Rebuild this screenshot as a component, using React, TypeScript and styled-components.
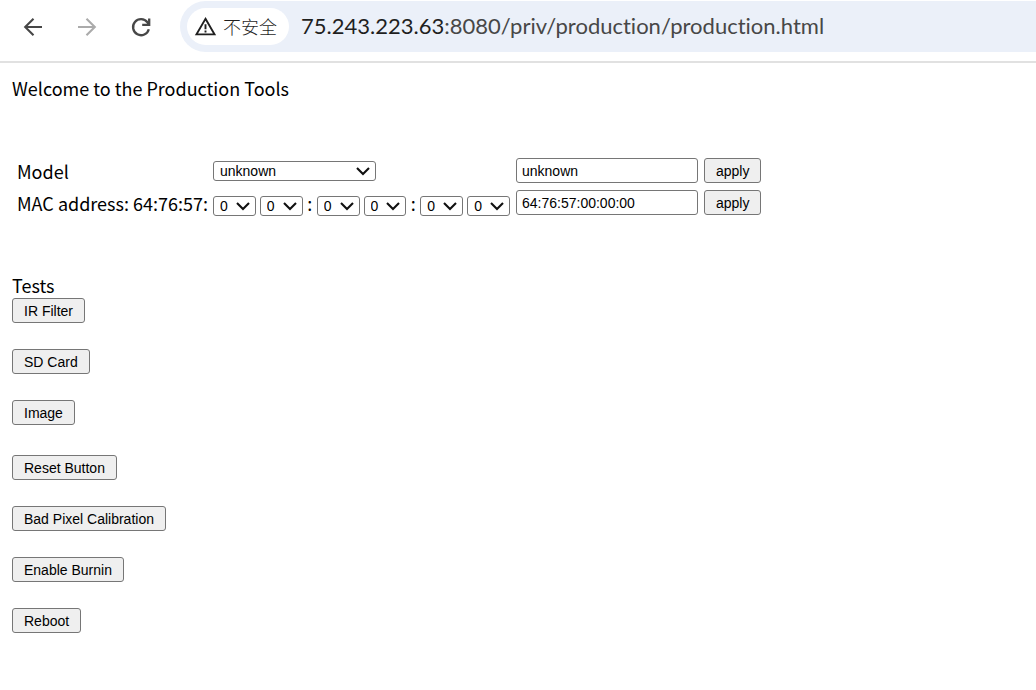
import React, { useState } from "react";
import styled, { createGlobalStyle } from "styled-components";

const GlobalStyle = createGlobalStyle`
  *, *::before, *::after { box-sizing: border-box; }
  body {
    margin: 0;
    background: #fff;
    color: #000;
    font-family: "Noto Sans CJK SC", "Noto Sans", sans-serif;
    font-size: 18px;
    line-height: 22px;
  }
`;

const Toolbar = styled.header`
  display: flex;
  align-items: center;
  height: 63px;
  padding: 1px 0 9px 20px;
  border-bottom: 2px solid #e1e1e1;
`;

const NavButtons = styled.nav`
  display: flex;
  gap: 28px;
  flex: none;
  margin-right: 26px;
`;

const NavButton = styled.button`
  display: flex;
  padding: 0;
  border: 0;
  background: none;
  color: #474747;
  &:disabled { color: #ababab; }
`;

const AddressBar = styled.div`
  display: flex;
  align-items: center;
  flex: 1;
  min-width: 0;
  height: 51px;
  padding-left: 7px;
  border-radius: 26px 0 0 26px;
  background: #ebf0f9;
`;

const SecurityChip = styled.button`
  display: flex;
  align-items: center;
  flex: none;
  gap: 6px;
  height: 37px;
  padding: 0 12px 1px 7px;
  border: 0;
  border-radius: 19px;
  background: #fff;
  color: #1f1f1f;
  font: 300 18px/24px "Noto Sans CJK SC", sans-serif;
`;

const Url = styled.div`
  margin-left: 12px;
  padding-bottom: 2px;
  overflow: hidden;
  white-space: nowrap;
  color: #474747;
  font: 22px/30px Lato, "Noto Sans", sans-serif;
  font-variant-ligatures: none;
`;

const Host = styled.span`
  color: #1f1f1f;
`;

const Content = styled.main`
  padding: 14px 12px;
`;

const Line = styled.p`
  margin: 0 0 2px;
`;

const Settings = styled.form`
  display: grid;
  grid-template-columns: 190px 297px 182px auto;
  justify-content: start;
  align-items: center;
  gap: 7px 6px;
  margin: 59px 0;
  padding-left: 5px;
`;

const Label = styled.label`
  white-space: nowrap;
  padding-top: 1px;
`;

const Octets = styled.div`
  display: flex;
  align-items: center;
  gap: 4px;
  height: 25px;
  padding-top: 6px;
`;

const Colon = styled.span`
  width: 6px;
  padding-bottom: 4px;
  text-align: center;
  line-height: 15px;
`;

const SelectBox = styled.span<{ $wide?: boolean }>`
  display: grid;
  align-items: center;
  width: ${(p) => (p.$wide ? 163 : 43)}px;
  > * { grid-area: 1 / 1; }
  > svg { justify-self: end; margin-right: 6px; pointer-events: none; }
`;

const SelectField = styled.select`
  appearance: none;
  width: 100%;
  height: 20px;
  margin: 0;
  padding: 0 6px;
  border: 1px solid #767676;
  border-radius: 3px;
  background: #fff;
  color: #000;
  font: 14px/18px "Liberation Sans", Arial, sans-serif;
`;

const TextField = styled.input`
  width: 100%;
  height: 25px;
  padding: 0 5px;
  border: 1px solid #767676;
  border-radius: 3px;
  background: #fff;
  color: #000;
  font: 14px/20px "Liberation Sans", Arial, sans-serif;
`;

const Button = styled.button`
  height: 25px;
  padding: 0 11px;
  border: 1px solid #767676;
  border-radius: 3px;
  background: #efefef;
  color: #000;
  font: 14px/20px "Liberation Sans", Arial, sans-serif;
`;

const TestGroup = styled.div`
  display: flex;
  flex-direction: column;
  align-items: flex-start;
  gap: 26px;
  & + & { margin-top: 30px; }
`;

const BackIcon = () => (
  <svg width="26" height="26" viewBox="0 0 26 26" fill="none" stroke="currentColor" strokeWidth="2.1" aria-hidden="true">
    <path d="M22 13H5.5M13.5 4.7 5.2 13l8.3 8.3" />
  </svg>
);

const ForwardIcon = () => (
  <svg width="26" height="26" viewBox="0 0 26 26" fill="none" stroke="currentColor" strokeWidth="2.1" aria-hidden="true">
    <path d="M4 13h16.5M12.5 4.7l8.3 8.3-8.3 8.3" />
  </svg>
);

const ReloadIcon = () => (
  <svg width="26" height="26" viewBox="0 0 26 26" fill="none" stroke="currentColor" strokeWidth="2.3" aria-hidden="true">
    <path d="M20.8 15.2A8 8 0 1 1 19.4 8.3L20.8 10.4" />
    <path d="M21.2 4.4v6.4h-7" />
  </svg>
);

const WarningIcon = () => (
  <svg width="23" height="23" viewBox="0 0 23 23" fill="none" stroke="currentColor" strokeWidth="1.9" aria-hidden="true">
    <path d="M11.5 3.8 20.5 19.4h-18Z" />
    <path d="M11.5 9.2v5M11.5 15.4v2" />
  </svg>
);

const Chevron = () => (
  <svg width="14" height="10" viewBox="0 0 14 10" fill="none" stroke="#101010" strokeWidth="2.1" aria-hidden="true">
    <path d="m1 2 6 6 6-6" />
  </svg>
);

const hexDigits = "0123456789ABCDEF".split("");

function Octet({ label }: { label: string }) {
  return (
    <SelectBox>
      <SelectField aria-label={label} defaultValue="0">
        {hexDigits.map((d) => (
          <option key={d}>{d}</option>
        ))}
      </SelectField>
      <Chevron />
    </SelectBox>
  );
}

export default function App() {
  const [model, setModel] = useState("unknown");
  const [mac, setMac] = useState("64:76:57:00:00:00");
  return (
    <>
      <GlobalStyle />
      <Toolbar>
        <NavButtons>
          <NavButton type="button" aria-label="Back"><BackIcon /></NavButton>
          <NavButton type="button" aria-label="Forward" disabled><ForwardIcon /></NavButton>
          <NavButton type="button" aria-label="Reload"><ReloadIcon /></NavButton>
        </NavButtons>
        <AddressBar>
          <SecurityChip type="button"><WarningIcon />不安全</SecurityChip>
          <Url><Host>75.243.223.63</Host>:8080/priv/production/production.html</Url>
        </AddressBar>
      </Toolbar>
      <Content>
        <Line>Welcome to the Production Tools</Line>
        <Settings onSubmit={(e) => e.preventDefault()}>
          <Label htmlFor="model">Model</Label>
          <SelectBox $wide>
            <SelectField id="model" defaultValue="unknown">
              <option>unknown</option>
            </SelectField>
            <Chevron />
          </SelectBox>
          <TextField aria-label="Model name" value={model} onChange={(e) => setModel(e.target.value)} />
          <Button type="submit">apply</Button>

          <Label htmlFor="mac">MAC address: 64:76:57:</Label>
          <Octets>
            <Octet label="Digit 1" />
            <Octet label="Digit 2" />
            <Colon>:</Colon>
            <Octet label="Digit 3" />
            <Octet label="Digit 4" />
            <Colon>:</Colon>
            <Octet label="Digit 5" />
            <Octet label="Digit 6" />
          </Octets>
          <TextField id="mac" value={mac} onChange={(e) => setMac(e.target.value)} />
          <Button type="submit">apply</Button>
        </Settings>
        <Line>Tests</Line>
        <TestGroup>
          <Button type="button">IR Filter</Button>
          <Button type="button">SD Card</Button>
          <Button type="button">Image</Button>
        </TestGroup>
        <TestGroup>
          <Button type="button">Reset Button</Button>
          <Button type="button">Bad Pixel Calibration</Button>
          <Button type="button">Enable Burnin</Button>
          <Button type="button">Reboot</Button>
        </TestGroup>
      </Content>
    </>
  );
}
